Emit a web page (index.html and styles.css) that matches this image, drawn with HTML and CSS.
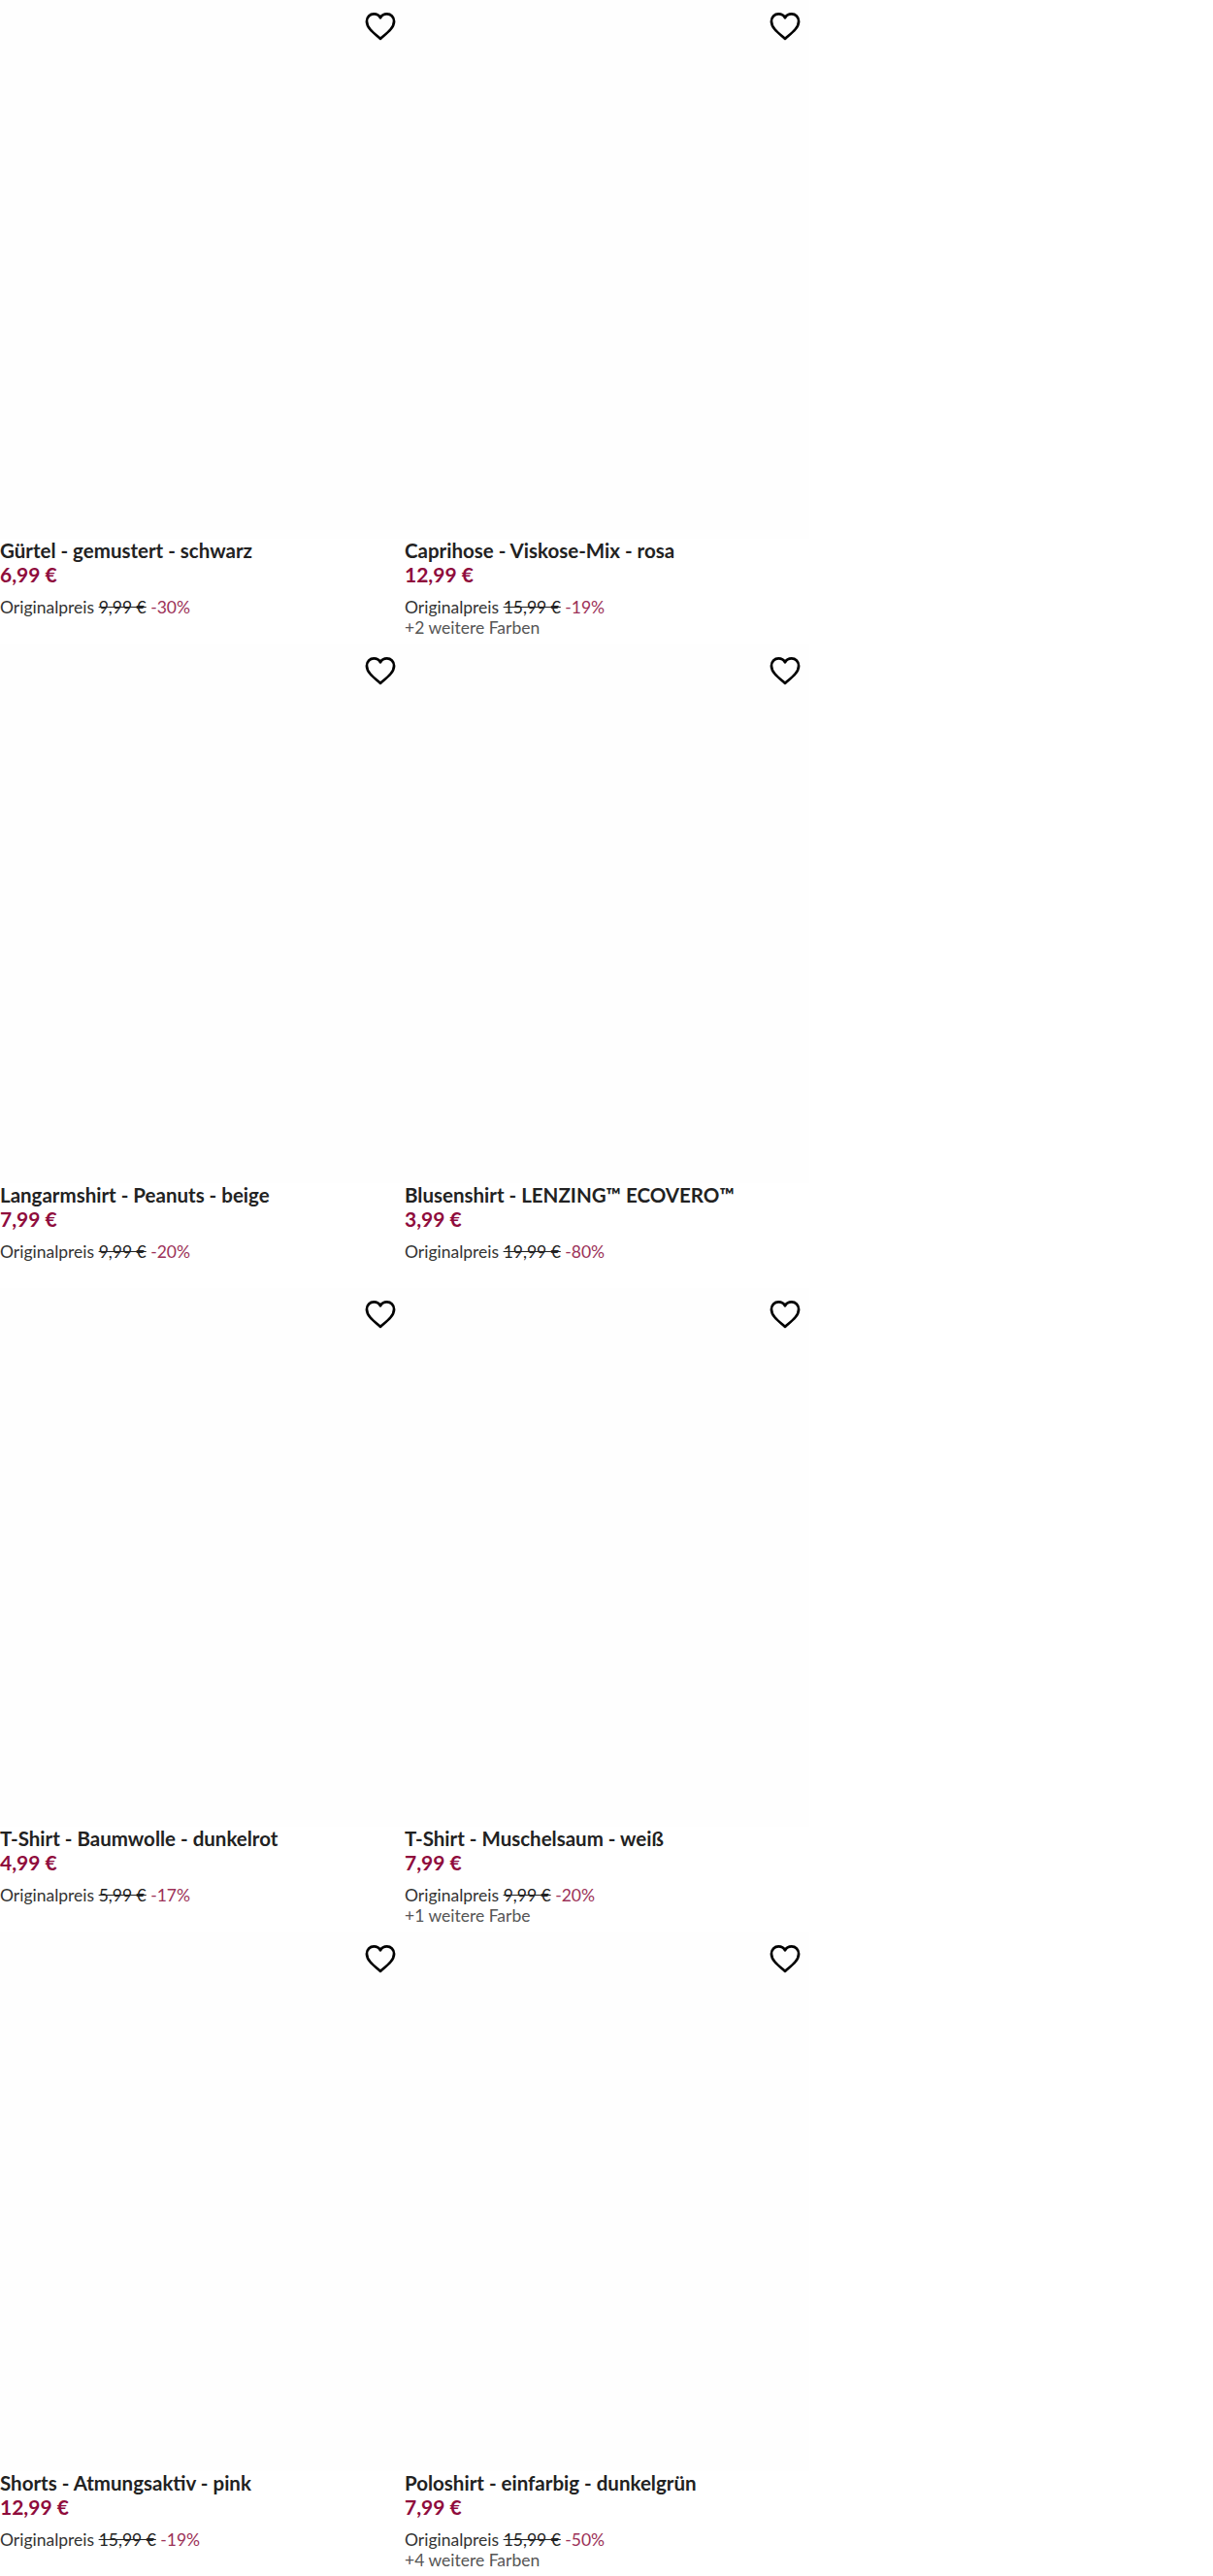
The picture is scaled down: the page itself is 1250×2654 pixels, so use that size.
FILE: index.html
```html
<!DOCTYPE html>
<html lang="de">
<head>
    <meta charset="UTF-8">
    <title>Produkte</title>
    <link rel="stylesheet" href="styles.css">
</head>
<body>
    <svg class="icon-defs" width="0" height="0">
        <symbol id="heart" viewBox="0 0 32 32">
            <path d="M16 27.5 C11 23 3.5 18 3.5 11.5 C3.5 7.5 6.5 4.8 10 4.8 C12.5 4.8 14.8 6 16 8.3 C17.2 6 19.5 4.8 22 4.8 C25.5 4.8 28.5 7.5 28.5 11.5 C28.5 18 21 23 16 27.5 Z" fill="none" stroke="currentColor" stroke-width="2.4" stroke-linejoin="round"/>
        </symbol>
    </svg>
    <div class="grid">
        <div class="card">
            <div class="card-img"><svg class="heart"><use href="#heart"/></svg></div>
            <div class="title">Gürtel - gemustert - schwarz</div>
            <div class="price">6,99 €</div>
            <div class="orig">Originalpreis <s>9,99 €</s> <span class="off">-30%</span></div>
        </div>
        <div class="card">
            <div class="card-img"><svg class="heart"><use href="#heart"/></svg></div>
            <div class="title">Caprihose - Viskose-Mix - rosa</div>
            <div class="price">12,99 €</div>
            <div class="orig">Originalpreis <s>15,99 €</s> <span class="off">-19%</span></div>
            <div class="colors">+2 weitere Farben</div>
        </div>
        <div class="card">
            <div class="card-img"><svg class="heart"><use href="#heart"/></svg></div>
            <div class="title">Langarmshirt - Peanuts - beige</div>
            <div class="price">7,99 €</div>
            <div class="orig">Originalpreis <s>9,99 €</s> <span class="off">-20%</span></div>
        </div>
        <div class="card">
            <div class="card-img"><svg class="heart"><use href="#heart"/></svg></div>
            <div class="title">Blusenshirt - LENZING™ ECOVERO™</div>
            <div class="price">3,99 €</div>
            <div class="orig">Originalpreis <s>19,99 €</s> <span class="off">-80%</span></div>
        </div>
        <div class="card">
            <div class="card-img"><svg class="heart"><use href="#heart"/></svg></div>
            <div class="title">T-Shirt - Baumwolle - dunkelrot</div>
            <div class="price">4,99 €</div>
            <div class="orig">Originalpreis <s>5,99 €</s> <span class="off">-17%</span></div>
        </div>
        <div class="card">
            <div class="card-img"><svg class="heart"><use href="#heart"/></svg></div>
            <div class="title">T-Shirt - Muschelsaum - weiß</div>
            <div class="price">7,99 €</div>
            <div class="orig">Originalpreis <s>9,99 €</s> <span class="off">-20%</span></div>
            <div class="colors">+1 weitere Farbe</div>
        </div>
        <div class="card">
            <div class="card-img"><svg class="heart"><use href="#heart"/></svg></div>
            <div class="title">Shorts - Atmungsaktiv - pink</div>
            <div class="price">12,99 €</div>
            <div class="orig">Originalpreis <s>15,99 €</s> <span class="off">-19%</span></div>
        </div>
        <div class="card">
            <div class="card-img"><svg class="heart"><use href="#heart"/></svg></div>
            <div class="title">Poloshirt - einfarbig - dunkelgrün</div>
            <div class="price">7,99 €</div>
            <div class="orig">Originalpreis <s>15,99 €</s> <span class="off">-50%</span></div>
            <div class="colors">+4 weitere Farben</div>
        </div>
    </div>
</body>
</html>
```
FILE: styles.css
```css
body {
    font-family: "Lato", "Open Sans", sans-serif;
    margin: 0;
    padding: 0;
    background-color: #ffffff;
    color: #222222;
}
.icon-defs {
    position: absolute;
}
.grid {
    display: grid;
    grid-template-columns: 417px 417px;
    grid-auto-rows: 663.5px;
}
.card {
    display: flex;
    flex-direction: column;
}
.card-img {
    position: relative;
    height: 555px;
    flex: none;
    background-color: #fefefe;
}
.heart {
    position: absolute;
    top: 9px;
    right: 7px;
    width: 36px;
    height: 36px;
    color: #000000;
}
.title {
    font-size: 20.5px;
    font-weight: 700;
    line-height: 24px;
}
.price {
    font-size: 21px;
    font-weight: 700;
    line-height: 25px;
    color: #8f0c3c;
}
.orig {
    margin-top: 11px;
    font-size: 17.5px;
    line-height: 21px;
    color: #333333;
}
.orig s {
    color: #222222;
}
.off {
    color: #9c3158;
}
.colors {
    font-size: 17.5px;
    line-height: 21px;
    color: #555555;
}
```
